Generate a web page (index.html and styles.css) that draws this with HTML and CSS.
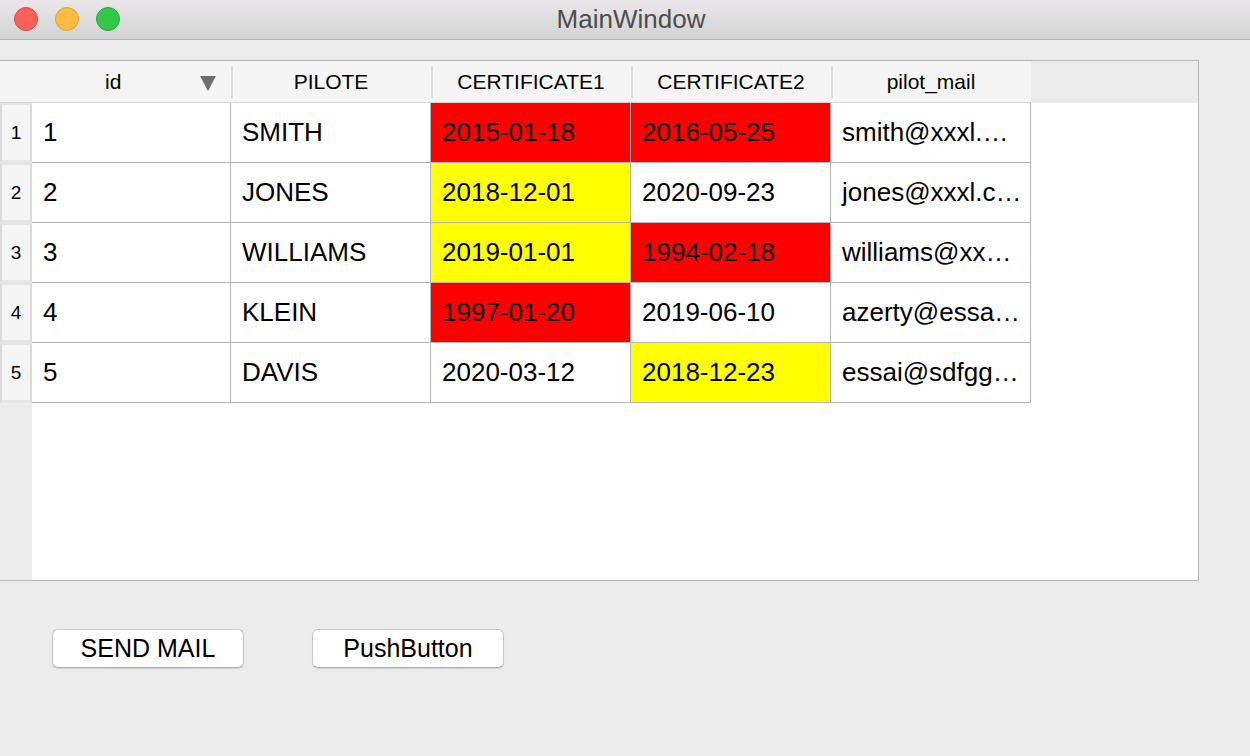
FILE: index.html
```html
<!DOCTYPE html>
<html lang="en">
<head>
    <meta charset="UTF-8">
    <title>MainWindow</title>
    <link rel="stylesheet" href="styles.css">
</head>
<body>
<div class="titlebar">
    <div class="lights">
        <span class="light red"></span>
        <span class="light yellow"></span>
        <span class="light green"></span>
    </div>
    <div class="title">MainWindow</div>
</div>
<div class="window">
    <div class="table">
        <div class="head corner"></div>
        <div class="head sorted"><span>id</span><i class="arrow"></i></div>
        <div class="head sep">PILOTE</div>
        <div class="head sep">CERTIFICATE1</div>
        <div class="head sep">CERTIFICATE2</div>
        <div class="head sep">pilot_mail</div>
        <div class="head-rest"></div>

        <div class="rownum">1</div>
        <div class="cell">1</div>
        <div class="cell">SMITH</div>
        <div class="cell red">2015-01-18</div>
        <div class="cell red">2016-05-25</div>
        <div class="cell">smith@xxxl.…</div>
        <div class="rest"></div>

        <div class="rownum">2</div>
        <div class="cell">2</div>
        <div class="cell">JONES</div>
        <div class="cell yellow">2018-12-01</div>
        <div class="cell">2020-09-23</div>
        <div class="cell">jones@xxxl.c…</div>
        <div class="rest"></div>

        <div class="rownum">3</div>
        <div class="cell">3</div>
        <div class="cell">WILLIAMS</div>
        <div class="cell yellow">2019-01-01</div>
        <div class="cell red">1994-02-18</div>
        <div class="cell">williams@xx…</div>
        <div class="rest"></div>

        <div class="rownum">4</div>
        <div class="cell">4</div>
        <div class="cell">KLEIN</div>
        <div class="cell red">1997-01-20</div>
        <div class="cell">2019-06-10</div>
        <div class="cell">azerty@essa…</div>
        <div class="rest"></div>

        <div class="rownum">5</div>
        <div class="cell">5</div>
        <div class="cell">DAVIS</div>
        <div class="cell">2020-03-12</div>
        <div class="cell yellow">2018-12-23</div>
        <div class="cell">essai@sdfgg…</div>
        <div class="rest"></div>

        <div class="gutter"></div>
        <div class="empty"></div>
    </div>
    <div class="buttons">
        <button class="btn">SEND MAIL</button>
        <button class="btn">PushButton</button>
    </div>
</div>
</body>
</html>
```

FILE: styles.css
```css
body {
    margin: 0;
    padding: 0;
    background: #ececec;
    font-family: 'Liberation Sans', 'Arial', sans-serif;
    color: #000;
    height: 756px;
    overflow: hidden;
}
.titlebar {
    height: 39px;
    border-bottom: 1px solid #b1b1b1;
    background: linear-gradient(#e9e7e9, #d3d3d3);
    display: flex;
    align-items: center;
    position: relative;
}
.lights {
    display: flex;
    gap: 17px;
    padding-left: 14px;
    margin-top: -2px;
}
.light {
    width: 22px;
    height: 22px;
    border-radius: 50%;
    border: 1px solid;
}
.light.red {
    background: #fc605c;
    border-color: #de4a44;
}
.light.yellow {
    background: #fdbc40;
    border-color: #dea236;
}
.light.green {
    background: #34c84a;
    border-color: #27aa35;
}
.title {
    position: absolute;
    left: 12px;
    right: 0;
    top: 4px;
    text-align: center;
    font-size: 26px;
    color: #4d4d4d;
    pointer-events: none;
}
.window {
    padding-top: 20px;
}
.table {
    width: 1198px;
    height: 519px;
    border: 1px solid #b4b4b4;
    border-left: none;
    background: #fff;
    display: grid;
    grid-template-columns: 32px 199px 200px 200px 200px 200px 1fr;
    grid-template-rows: 42px repeat(5, 60px) 1fr;
}
.head {
    background: #f5f5f5;
    border-bottom: 1px solid #d6d6d6;
    font-size: 21px;
    display: flex;
    align-items: center;
    justify-content: center;
    position: relative;
}
.head.sep::before {
    content: '';
    position: absolute;
    left: 0;
    top: 5px;
    bottom: 4px;
    width: 2px;
    background: #dcdcdc;
}
.head.sorted {
    justify-content: flex-start;
    padding-left: 73px;
}
.arrow {
    position: absolute;
    left: 168px;
    top: 15px;
    width: 0;
    height: 0;
    border-left: 8px solid transparent;
    border-right: 8px solid transparent;
    border-top: 15px solid #707070;
}
.head-rest {
    background: #ececec;
    border-bottom: 1px solid #ececec;
}
.rownum {
    background: #f5f5f5;
    font-size: 19px;
    display: flex;
    align-items: center;
    justify-content: center;
    border-left: 2px solid #dadada;
    border-right: 2px solid #dadada;
    border-top: 2px solid #e6e6e6;
    border-bottom: 3px solid #e6e6e6;
    box-sizing: border-box;
}
.cell {
    border-right: 1px solid #b4b4b4;
    border-bottom: 1px solid #b4b4b4;
    font-size: 26px;
    display: flex;
    align-items: center;
    padding-left: 11px;
    white-space: nowrap;
    overflow: hidden;
}
.cell.red {
    background: #ff0000;
}
.cell.yellow {
    background: #ffff00;
}
.gutter {
    background: #ececec;
}
.empty {
    grid-column: 2 / 8;
}
.buttons {
    display: flex;
    gap: 68px;
    padding: 48px 0 0 52px;
}
.btn {
    width: 192px;
    height: 39px;
    background: #fff;
    border: 1px solid #c8c8c8;
    border-bottom-color: #b0b0b0;
    border-radius: 6px;
    box-shadow: 0 1px 1px rgba(0, 0, 0, 0.12);
    font-family: 'Liberation Sans', 'Arial', sans-serif;
    font-size: 25px;
    color: #000;
    padding: 0;
}
```
